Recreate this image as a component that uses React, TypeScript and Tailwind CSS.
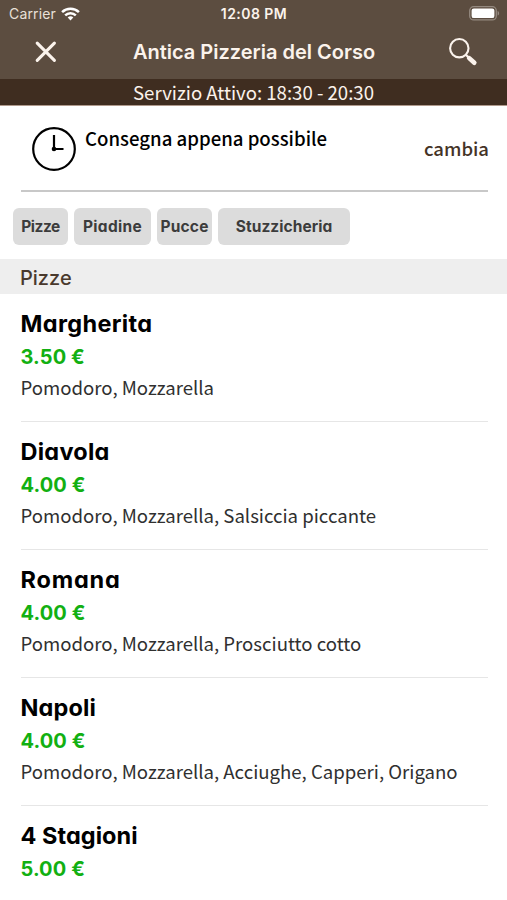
const CATEGORIES = [
  { label: "Pizze", box: "w-[55px]", text: "tracking-[-0.5px]" },
  { label: "Piadine", box: "w-[77px]", text: "tracking-[0.3px]" },
  { label: "Pucce", box: "w-[55px]", text: "tracking-[0.2px]" },
  { label: "Stuzzicheria", box: "w-[132px]", text: "tracking-[0.05px]" },
];

const PIZZAS = [
  { name: "Margherita", price: "3.50 €", toppings: "Pomodoro, Mozzarella", text: "tracking-[0.35px]" },
  { name: "Diavola", price: "4.00 €", toppings: "Pomodoro, Mozzarella, Salsiccia piccante", text: "tracking-[0.25px]" },
  { name: "Romana", price: "4.00 €", toppings: "Pomodoro, Mozzarella, Prosciutto cotto", text: "tracking-[0.8px]" },
  { name: "Napoli", price: "4.00 €", toppings: "Pomodoro, Mozzarella, Acciughe, Capperi, Origano", text: "tracking-[0.15px]" },
  { name: "4 Stagioni", price: "5.00 €", toppings: "", text: "tracking-[0.05px]" },
];

function WifiIcon() {
  return (
    <svg width="19" height="14" viewBox="0 0 19 14" fill="none" stroke="#fff" strokeWidth="2.5">
      <path d="M1.1 5.1C5.7 0.6 13.3 0.6 17.9 5.1" />
      <path d="M4.2 8.3C7.1 5.4 11.9 5.4 14.8 8.3" />
      <path d="M6.7 10.4C8.2 9 10.8 9 12.3 10.4L9.5 13.4Z" fill="#fff" stroke="none" />
    </svg>
  );
}

function BatteryIcon() {
  return (
    <svg width="31" height="15" viewBox="0 0 31 15" fill="none">
      <rect x="0.7" y="0.7" width="26.6" height="13.2" rx="4" stroke="#94897f" strokeWidth="1.3" />
      <rect x="2.6" y="2.5" width="22.8" height="9.6" rx="2.2" fill="#fff" />
      <path d="M28.6 5C30.6 5.7 30.6 8.9 28.6 9.6Z" fill="#94897f" />
    </svg>
  );
}

function CloseIcon() {
  return (
    <svg width="22" height="22" viewBox="0 0 22 22" stroke="currentColor" strokeWidth="3.1" strokeLinecap="round">
      <path d="M2.2 2.2L19.4 19.4M19.4 2.2L2.2 19.4" />
    </svg>
  );
}

function SearchIcon() {
  return (
    <svg width="30" height="30" viewBox="0 0 30 30" fill="none" stroke="currentColor">
      <circle cx="11.3" cy="11.2" r="9.2" strokeWidth="2.1" />
      <path d="M17.8 17.7L21 20.9" strokeWidth="2.2" />
      <path d="M21.2 21.1L26.3 25.7" strokeWidth="4.6" strokeLinecap="round" />
    </svg>
  );
}

function ClockIcon() {
  return (
    <svg width="46" height="46" viewBox="0 0 46 46" fill="none" stroke="currentColor">
      <circle cx="23" cy="23" r="20.8" strokeWidth="2.2" />
      <path d="M23 9V23H32.5" strokeWidth="2.2" />
      <circle cx="23" cy="23" r="2.3" fill="currentColor" stroke="none" />
    </svg>
  );
}

export default function App() {
  return (
    <div className="h-[900px] w-[507px] overflow-hidden bg-white font-['Noto_Sans_CJK_JP',sans-serif] text-black">
      <header className="bg-[#5c4d40] text-[#fbf3ec]">
        <div className="grid h-7 grid-cols-3 items-center pl-[9px] pr-[7px] pb-px font-['Inter',sans-serif]">
          <div className="flex items-center gap-[5px] text-[14px] text-[#e9e0d8]">
            <span className="tracking-[0.15px]">Carrier</span>
            <WifiIcon />
          </div>
          <span className="-ml-px whitespace-nowrap text-center text-[14px] font-semibold tracking-[0.45px]">12:08 PM</span>
          <div className="flex justify-end">
            <BatteryIcon />
          </div>
        </div>
        <div className="flex h-[51px] items-center justify-between pb-[3px] pl-[35px] pr-[29px]">
          <CloseIcon />
          <h1 className="-mr-[3px] font-['Inter',sans-serif] text-[20px] font-semibold leading-[48px]">
            Antica Pizzeria del Corso
          </h1>
          <SearchIcon />
        </div>
        <p className="h-[27px] border-b border-[#b09a8c] bg-[#3f2d20] text-center text-[18.6px] leading-[26px]">
          Servizio Attivo: 18:30 - 20:30
        </p>
      </header>

      <section className="ml-[21px] mr-[19px] flex h-[86px] border-b-2 border-[#c8c8c8] pl-[10px] pt-5">
        <ClockIcon />
        <p className="ml-2 flex-1 text-[18.6px] font-medium leading-[24px]">Consegna appena possibile</p>
        <button className="-mr-px h-[46px] text-[18.5px] font-medium text-[#443327]">cambia</button>
      </section>

      <nav className="flex gap-1.5 px-[13px] pb-[14px] pt-4">
        {CATEGORIES.map((c) => (
          <button
            key={c.label}
            className={`h-[37px] rounded-md bg-[#dcdcdc] font-['Inter',sans-serif] text-[15.5px] font-bold text-[#3c3c3c] [font-feature-settings:'cv11'] ${c.box}`}
          >
            <span className={c.text}>{c.label}</span>
          </button>
        ))}
      </nav>

      <h2 className="h-[35px] bg-[#eeeeee] pl-5 font-['Inter',sans-serif] text-[20px] font-medium leading-[38px] text-[#49392d]">
        Pizze
      </h2>

      <ul className="ml-[21px] mr-[19px]">
        {PIZZAS.map((p) => (
          <li key={p.name} className="h-32 border-b border-[#e6e6e6] pt-[14px]">
            <h3
              className={`-ml-[0.5px] font-['Inter',sans-serif] text-[23.5px] font-bold leading-[31px] [font-feature-settings:'cv11'] ${p.text}`}
            >
              {p.name}
            </h3>
            <p className="-ml-[0.5px] mt-px font-['Inter',sans-serif] text-[20px] font-bold leading-[34px] tracking-[0.1px] text-[#12b012]">
              {p.price}
            </p>
            <p className="-ml-[0.5px] text-[18.6px] leading-[25px] text-[#303030]">{p.toppings}</p>
          </li>
        ))}
      </ul>
    </div>
  );
}
